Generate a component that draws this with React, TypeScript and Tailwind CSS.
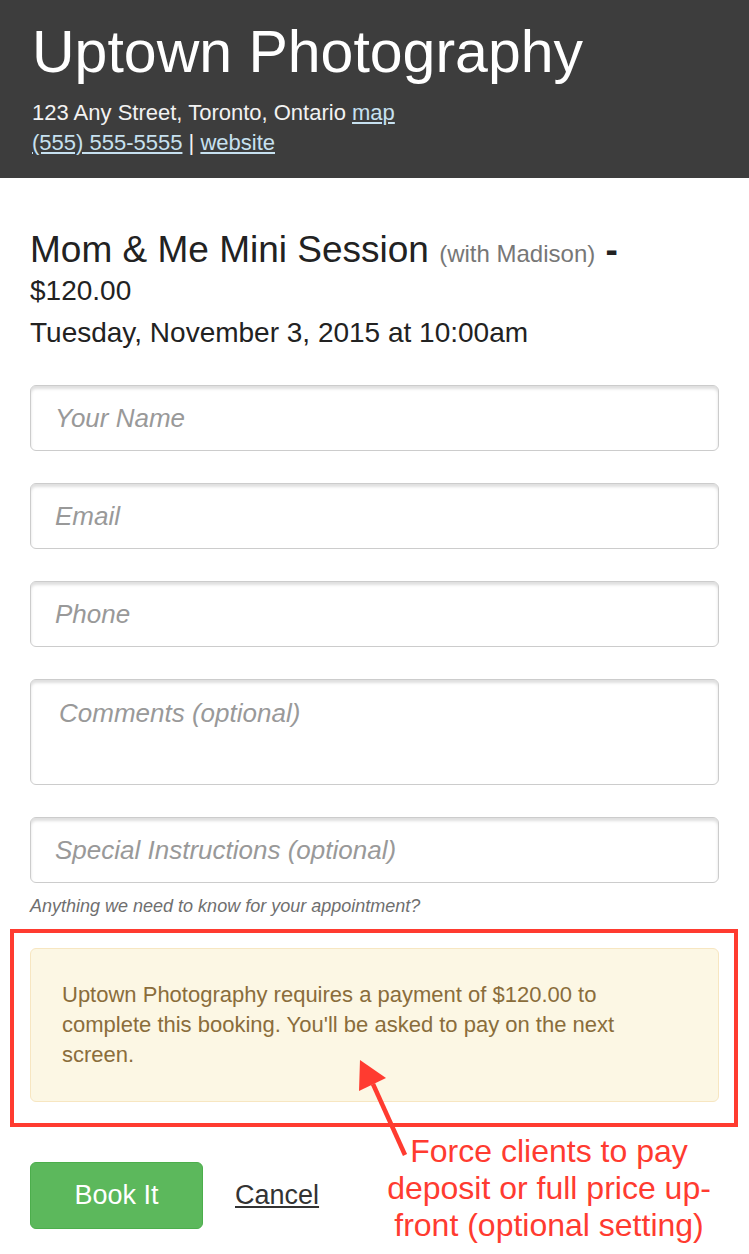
import React from "react";

const font = { fontFamily: '"Liberation Sans", Arial, sans-serif' };

const Field = ({ placeholder }: { placeholder: string }) => (
  <input
    type="text"
    placeholder={placeholder}
    className="block w-full h-[66px] rounded-[6px] border border-[#cccccc] bg-white pl-[24px] text-[26px] text-[#333] shadow-[inset_0_3px_3px_rgba(0,0,0,0.13)] outline-none placeholder:italic placeholder:text-[#999999]"
    style={font}
  />
);

export default function App() {
  return (
    <div className="relative w-[749px] h-[1254px] overflow-hidden bg-white" style={font}>
      {/* HEADER */}
      <header className="bg-[#3d3d3d] h-[178px] px-[32px] pt-[20px]">
        <h1 className="text-[59px] leading-[64px] text-white">Uptown Photography</h1>
        <div className="mt-[14px] text-[22px] leading-[30px] text-[#f2f2f2]">
          <div>
            123 Any Street, Toronto, Ontario{" "}
            <a href="#" className="underline text-[#c7e1f0]">map</a>
          </div>
          <div>
            <a href="#" className="underline text-[#c7e1f0]">(555) 555-5555</a> |{" "}
            <a href="#" className="underline text-[#c7e1f0]">website</a>
          </div>
        </div>
      </header>

      {/* MAIN */}
      <main className="px-[30px] pt-[53px]">
        <h3 className="text-[37px] leading-[38px] text-[#222222]">
          Mom &amp; Me Mini Session{" "}
          <small className="text-[24px] leading-none text-[#777777]">(with Madison)</small>{" "}
          <span className="font-bold">-</span>{" "}
          <span className="text-[28px] leading-none">$120.00</span>
        </h3>
        <div className="mt-[6px] text-[28px] leading-[40px] text-[#222222]">
          Tuesday, November 3, 2015 at 10:00am
        </div>

        <form className="mt-[32px] flex flex-col gap-[32px]">
          <Field placeholder="Your Name" />
          <Field placeholder="Email" />
          <Field placeholder="Phone" />
          <textarea
            placeholder="Comments (optional)"
            className="block w-full h-[106px] resize-none rounded-[6px] border border-[#cccccc] bg-white pl-[28px] pt-[18px] text-[26px] leading-[30px] text-[#333] shadow-[inset_0_3px_3px_rgba(0,0,0,0.13)] outline-none placeholder:italic placeholder:text-[#999999]"
            style={font}
          />
          <div>
            <Field placeholder="Special Instructions (optional)" />
            <p className="mt-[11px] text-[18px] leading-[24px] italic text-[#6f6f6f]">
              Anything we need to know for your appointment?
            </p>
          </div>
        </form>

        {/* ALERT */}
        <div className="relative mt-[30px]">
          <div className="rounded-[6px] border border-[#f7e6c1] bg-[#fcf7e4] pl-[31px] pr-[60px] py-[31px] text-[22px] leading-[30px] text-[#8a6d3b]">
            Uptown Photography requires a payment of $120.00 to complete this booking. You'll be asked to pay on the next screen.
          </div>
          <div className="absolute -left-[20px] -right-[19px] -top-[19px] -bottom-[25px] border-[4px] border-[#ff3b30] pointer-events-none" />
        </div>

        {/* ACTIONS */}
        <div className="relative mt-[60px] flex items-center">
          <button
            type="button"
            className="h-[67px] w-[173px] rounded-[6px] border border-[#4cae4c] bg-[#5cb85c] text-[27px] text-white"
            style={font}
          >
            Book It
          </button>
          <a href="#" className="ml-[32px] text-[27px] text-[#333] underline">
            Cancel
          </a>
          <div className="absolute left-[349px] -top-[29px] w-[340px] text-center text-[32px] leading-[37px] text-[#ff3b30] whitespace-nowrap">
            Force clients to pay
            <br />
            deposit or full price up-
            <br />
            front (optional setting)
          </div>
        </div>
      </main>

      {/* annotation arrow */}
      <svg className="absolute left-0 top-0 pointer-events-none" width="749" height="1254">
        <line x1="405" y1="1155" x2="373" y2="1084" stroke="#ff3b30" strokeWidth="4.5" />
        <polygon points="360,1060 359,1091 386,1078" fill="#ff3b30" />
      </svg>
    </div>
  );
}
